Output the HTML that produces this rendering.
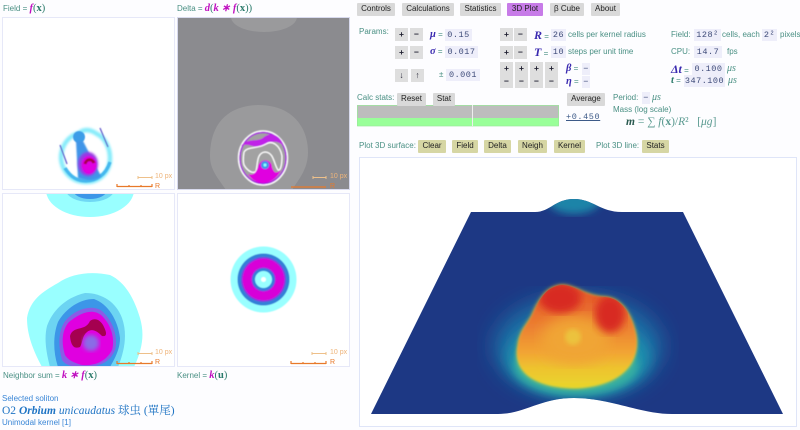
<!DOCTYPE html>
<html><head><meta charset="utf-8">
<style>
html{margin:0;padding:0;background:#fdfdff;}
body{margin:0;padding:0;background:#fdfdff;width:800px;height:430px;overflow:hidden;position:relative;font-family:"Liberation Sans",Arial,sans-serif;font-size:8px;color:#4a9084;filter:blur(.25px);}
.t{position:absolute;line-height:12px;white-space:nowrap;}
.b{position:absolute;background:#d9d9d9;color:#222;text-align:center;line-height:12px;height:12.500px;border-radius:1px;font-size:8px;}
.y{background:#d6d6a4;}
.n{position:absolute;background:#dedede;color:#223;text-align:center;width:13px;height:13px;line-height:13px;font-size:8.500px;font-weight:bold;}
.v{position:absolute;background:#eeeefa;color:#3d4a78;font-family:"Liberation Mono",monospace;font-size:8.500px;line-height:12px;height:11.500px;text-align:center;letter-spacing:.5px;}
.m{font-family:"Liberation Serif",serif;font-style:italic;font-weight:bold;font-size:10.500px;}
.p{font-family:'Liberation Serif',serif;font-size:10.500px;color:#2a7a6a;}
.pu{color:#3a2ab0}.mg{color:#c010c0}
svg{position:absolute;left:0;top:0;}
.o{color:#eeb47a;font-size:7px}.r{color:#e8792a;font-size:7px}
.s{font-family:'Liberation Serif',serif;font-style:italic;font-size:10px}
</style></head><body>

<svg width="800" height="430" viewBox="0 0 800 430">
<defs>
<filter id="b1"><feGaussianBlur stdDeviation="1"/></filter>
<filter id="b2"><feGaussianBlur stdDeviation="2"/></filter>
<filter id="b4"><feGaussianBlur stdDeviation="4"/></filter>
<filter id="b7"><feGaussianBlur stdDeviation="7"/></filter>
<filter id="b12"><feGaussianBlur stdDeviation="11"/></filter>
<filter id="b05"><feGaussianBlur stdDeviation=".5"/></filter>
<clipPath id="surf"><path d="M471,212 L535,212 C550,212 555,199 574,199 C593,199 600,212 622,212 L683,212 L783,414 L672,414 C640,414 610,398 574,398 C540,398 525,414 498,414 L371,414 Z"/></clipPath>
<clipPath id="pF"><rect x="3" y="18" width="171" height="171"/></clipPath>
<clipPath id="pD"><rect x="178" y="18" width="171" height="171"/></clipPath>
<clipPath id="pN"><rect x="3" y="194" width="171" height="172"/></clipPath>
<linearGradient id="body" x1="0" y1="0" x2="0" y2="1">
<stop offset="0" stop-color="#e2502a"/><stop offset=".4" stop-color="#ec7f30"/><stop offset=".66" stop-color="#f2a534"/><stop offset=".8" stop-color="#eec22f"/><stop offset="1" stop-color="#e8d62c"/>
</linearGradient>
</defs>

<!-- panels -->
<rect x="2.500" y="17.500" width="172" height="172" fill="#fff" stroke="#e6e8f8"/>
<rect x="177.500" y="17.500" width="172" height="172" fill="#8b8b8f" stroke="#d8daee"/>
<rect x="2.500" y="193.500" width="172" height="173" fill="#fff" stroke="#e6e8f8"/>
<rect x="177.500" y="193.500" width="172" height="173" fill="#fff" stroke="#e6e8f8"/>
<rect x="359.500" y="157.500" width="437" height="269" fill="#fff" stroke="#dfe5f8"/>

<!-- Field -->
<g clip-path="url(#pF)">
<g filter="url(#b05)">
<path d="M61,158 C62,172 72,182 86,182 C100,182 110,172 110,158 C110,147 104,137 97,134 C90,129 84,129 79,133 C68,136 61,146 61,158Z" fill="none" stroke="#86ecfb" stroke-width="4.500" filter="url(#b1)"/>
<path d="M65,168 C71,178 78,181 86,181 C96,181 106,175 110,162" fill="none" stroke="#45b8ee" stroke-width="3.500"/>
<circle cx="79" cy="137" r="6" fill="#3d9de8"/>
<path d="M76,141 L83,141 L101,176 C96,181 86,181 78,178 Z" fill="#3f95e8" filter="url(#b05)"/>
<ellipse cx="88" cy="164" rx="10" ry="12" fill="#9a38e4" filter="url(#b1)"/>
<ellipse cx="89" cy="165" rx="7.500" ry="9" fill="#e000e0" filter="url(#b05)"/>
<path d="M85,164 C86,159 92,158 94,163" fill="none" stroke="#a80050" stroke-width="3"/>
<path d="M60,145 L67,164" stroke="#5a50c8" stroke-width="1.200" fill="none"/>
<path d="M100,128 L108,147" stroke="#5a50c8" stroke-width="1.200" fill="none"/>
</g>
</g>

<!-- Delta -->
<g clip-path="url(#pD)">
<ellipse cx="264" cy="17" rx="33" ry="15" fill="#9a9a9c"/>
<path d="M210,156 C210,130 222,106 258,105 C295,105 308,130 308,152 C308,170 298,180 292,190 L226,190 C218,178 210,170 210,156Z" fill="#9a9a9c"/>
<g filter="url(#b05)">
<ellipse cx="263" cy="158" rx="24.500" ry="27" fill="#a2a2a2" stroke="#fff" stroke-width="1.500"/>
<ellipse cx="263" cy="158" rx="23" ry="25.500" fill="none" stroke="#a818e0" stroke-width="1.400"/>
<path d="M241,146 C248,137 258,143 264,137 C270,132 280,134 284,146 C276,139 270,142 262,146 C254,149 248,142 241,146Z" fill="#c020e8"/>
<path d="M244,152 C248,146 258,149 266,144 C272,140 280,145 282,156" fill="none" stroke="#fff" stroke-width="1.300"/>
<path d="M244,152 C243,158 243,162 244,165 C248,172 254,174 256,171 C258,165 256,153 265,152 C274,152 274,165 278,170 C280,171 282,167 282,156" fill="none" stroke="#fff" stroke-width="1.300"/>
<path d="M248,174 C254,176 256,172 258,167 C259,158 272,158 272,167 C274,173 276,174 281,170 C278,178 270,183 263,183 C256,183 251,179 248,174Z" fill="#e000e0"/>
<circle cx="265" cy="165" r="4" fill="#3f95e8"/><circle cx="265" cy="165" r="1.600" fill="#8ff"/>
</g>
</g>

<!-- Neighbor -->
<g clip-path="url(#pN)">
<ellipse cx="90" cy="190" rx="44" ry="27" fill="#99ffff"/>
<ellipse cx="90" cy="190" rx="24" ry="12" fill="#70d8f4"/>
<ellipse cx="90" cy="190" rx="17" ry="9" fill="#3c96e8"/>
<path d="M42,367 C33,350 27,335 27,318 C30,300 42,292 58,283 C72,273 92,271 110,275 C125,282 134,298 140,318 C145,335 142,350 134,367Z" fill="#99ffff"/>
<path d="M50,367 C46,352 44,338 47,326 C52,312 64,298 85,293 C102,293 116,302 122,318 C128,335 124,352 118,367Z" fill="#6cd4f2"/>
<path d="M58,367 C53,352 53,335 58,322 C66,308 80,299 94,299 C108,304 118,320 120,338 C120,350 114,360 110,367Z" fill="#3c96e8"/>
<path d="M62,360 C58,345 58,330 66,320 C76,309 92,304 102,311 C114,322 118,338 115,350 C110,362 100,367 84,367 C74,367 66,366 62,360Z" fill="#8a5ce6"/>
<path d="M65,355 C61,342 62,330 69,322 C80,313 92,308 101,315 C112,325 115,340 112,350 C106,362 94,366 82,365 C74,363 68,360 65,355Z" fill="#e000e0"/>
<path d="M70,336 C73,325 85,332 90,321 C95,317 101,320 104,327 C107,333 107,337 102,336 C97,331 92,328 87,332 C82,336 83,342 80,347 C75,349 71,347 70,336Z" fill="#a50050"/>
<circle cx="91" cy="343" r="8" fill="#8a6ce6" filter="url(#b2)"/>
</g>

<!-- Kernel -->
<g filter="url(#b05)">
<circle cx="263.500" cy="279.500" r="33" fill="#99ffff"/>
<circle cx="263.500" cy="279.500" r="26" fill="#3080d8"/>
<circle cx="263.500" cy="279.500" r="22.500" fill="#7a40e0"/>
<circle cx="263.500" cy="279.500" r="21" fill="#d800d8"/>
<circle cx="263.500" cy="279.500" r="12" fill="#7a40e0"/>
<circle cx="263.500" cy="279.500" r="11" fill="#3080d8"/>
<circle cx="263.500" cy="279.500" r="8.500" fill="#99ffff"/>
<circle cx="263.500" cy="279.500" r="2.500" fill="#fff"/>
</g>

<!-- scale bars -->
<g fill="none">
<g stroke="#eec08a"><path d="M138,177.500H152M138,176V179M152,176V179"/><path d="M313,177.500H326M313,176V179M326,176V179"/><path d="M138,353.500H152M138,352V355M152,352V355"/><path d="M312,353.500H326M312,352V355M326,352V355"/></g>
<g stroke="#e8792a" stroke-width="1.200"><path d="M117,186.500H152M117,184V187M129,185V187M141,185V187M152,184V187"/><path d="M291,187H326"/><path d="M117,363.500H152M117,361V364M129,362V364M141,362V364M152,361V364"/><path d="M291,363.500H326M291,361V364M303,362V364M315,362V364M326,361V364"/></g>
</g>

<!-- 3D surface -->
<g clip-path="url(#surf)">
<rect x="360" y="190" width="436" height="230" fill="#1d3884"/>
<ellipse cx="574" cy="199" rx="27" ry="15" fill="#1b84a8" filter="url(#b4)"/>
<ellipse cx="578" cy="346" rx="84" ry="50" fill="#1a6fa6" filter="url(#b12)"/>
<ellipse cx="578" cy="358" rx="72" ry="38" fill="#1c92ae" filter="url(#b7)"/>
<ellipse cx="576" cy="366" rx="62" ry="29" fill="#38b0a0" filter="url(#b4)"/>
<path d="M518,345 C520,330 527,325 532,315 C540,297 548,286 562,285 C575,285 585,296 605,297 C622,298 632,315 636,335 C640,360 625,385 577,388 C540,388 512,375 518,345Z" fill="#e6d32c" filter="url(#b2)"/>
<path d="M518,345 C520,330 527,325 532,315 C540,297 548,286 562,285 C575,285 585,296 605,297 C622,298 632,315 636,335 C640,360 625,385 577,388 C540,388 512,375 518,345Z" fill="url(#body)" filter="url(#b1)"/>
<clipPath id="bl"><path d="M518,345 C520,330 527,325 532,315 C540,297 548,286 562,285 C575,285 585,296 605,297 C622,298 632,315 636,335 C640,360 625,385 577,388 C540,388 512,375 518,345Z"/></clipPath>
<g clip-path="url(#bl)">
<ellipse cx="575" cy="340" rx="34" ry="24" fill="#f0a535" filter="url(#b7)"/>
<ellipse cx="560" cy="298" rx="21" ry="15" fill="#d82a22" filter="url(#b4)"/>
<ellipse cx="610" cy="314" rx="15" ry="19" fill="#d82a22" filter="url(#b4)"/>
<ellipse cx="573" cy="337" rx="8" ry="8" fill="#ecc23c" filter="url(#b2)"/>
</g>
</g>

<!-- stats bars -->
<rect x="357" y="105" width="202" height="13" fill="#bdbdbd"/>
<rect x="357" y="118" width="202" height="8" fill="#99ff99"/>
<rect x="357.500" y="105.500" width="201" height="20.500" fill="none" stroke="#9be89b" stroke-width=".7"/>
<rect x="472" y="105" width="1" height="21" fill="#eee"/>
</svg>

<!-- labels left -->
<div class="t" style="left:3px;top:3px">Field = <span class="m mg">f</span><span class="p">(<b>x</b>)</span></div>
<div class="t" style="left:177px;top:3px">Delta = <span class="m mg">d</span><span class="p">(</span><span class="m mg">k ∗ f</span><span class="p">(<b>x</b>))</span></div>
<div class="t" style="left:3px;top:370px">Neighbor sum = <span class="m mg">k ∗ f</span><span class="p">(<b>x</b>)</span></div>
<div class="t" style="left:177px;top:370px">Kernel = <span class="m mg">k</span><span class="p">(<b>u</b>)</span></div>
<div class="t" style="left:2px;top:393px;color:#3a86d6">Selected soliton</div>
<div class="t" style="left:2px;top:405px;color:#1f74c4;font-family:'Liberation Serif','Noto Serif CJK SC',serif;font-size:11.500px">O2 <b><i>Orbium</i></b> <i>unicaudatus</i> 球虫 (單尾)</div>
<div class="t" style="left:2px;top:417px;color:#3a86d6">Unimodal kernel [1]</div>

<div class="t o" style="left:155px;top:171px">10 px</div>
<div class="t r" style="left:155px;top:181px">R</div>
<div class="t o" style="left:330px;top:171px">10 px</div>
<div class="t r" style="left:330px;top:181px">R</div>
<div class="t o" style="left:155px;top:347px">10 px</div>
<div class="t r" style="left:155px;top:357px">R</div>
<div class="t o" style="left:330px;top:347px">10 px</div>
<div class="t r" style="left:330px;top:357px">R</div>

<!-- tabs -->
<div class="b" style="left:357px;top:3px;width:38px">Controls</div>
<div class="b" style="left:402px;top:3px;width:52px">Calculations</div>
<div class="b" style="left:460px;top:3px;width:41px">Statistics</div>
<div class="b" style="left:507px;top:3px;width:36px;background:#c77be8">3D Plot</div>
<div class="b" style="left:550px;top:3px;width:34px">β Cube</div>
<div class="b" style="left:591px;top:3px;width:29px">About</div>

<!-- params -->
<div class="t" style="left:359px;top:26px">Params:</div>
<div class="n" style="left:395px;top:28px">+</div><div class="n" style="left:410px;top:28px">−</div>
<div class="n" style="left:395px;top:46px">+</div><div class="n" style="left:410px;top:46px">−</div>
<div class="n" style="left:395px;top:69px">↓</div><div class="n" style="left:411px;top:69px">↑</div>
<div class="t" style="left:430px;top:29px"><span class="m pu">μ</span> =</div><div class="v" style="left:445px;top:29px;width:27px">0.15</div>
<div class="t" style="left:430px;top:46px"><span class="m pu">σ</span> =</div><div class="v" style="left:445px;top:46px;width:33px">0.017</div>
<div class="t" style="left:439px;top:69px">±</div><div class="v" style="left:446px;top:69px;width:34px">0.001</div>

<div class="n" style="left:500px;top:28px">+</div><div class="n" style="left:514px;top:28px">−</div>
<div class="n" style="left:500px;top:46px">+</div><div class="n" style="left:514px;top:46px">−</div>
<div class="t" style="left:534px;top:29px"><span class="m pu" style="font-size:12px">R</span> =</div><div class="v" style="left:551px;top:29px;width:15px">26</div>
<div class="t" style="left:568px;top:29px">cells per kernel radius</div>
<div class="t" style="left:534px;top:46px"><span class="m pu" style="font-size:12px">T</span> =</div><div class="v" style="left:551px;top:46px;width:15px">10</div>
<div class="t" style="left:568px;top:46px">steps per unit time</div>

<div class="n" style="left:500px;top:62px">+</div><div class="n" style="left:515px;top:62px">+</div><div class="n" style="left:530px;top:62px">+</div><div class="n" style="left:545px;top:62px">+</div>
<div class="n" style="left:500px;top:75px">−</div><div class="n" style="left:515px;top:75px">−</div><div class="n" style="left:530px;top:75px">−</div><div class="n" style="left:545px;top:75px">−</div>
<div class="t" style="left:566px;top:63px"><span class="m pu">β</span> =</div><div class="v" style="left:582px;top:63px;width:8px">−</div>
<div class="t" style="left:566px;top:76px"><span class="m pu">η</span> =</div><div class="v" style="left:582px;top:76px;width:8px">−</div>

<div class="t" style="left:671px;top:29px">Field:</div><div class="v" style="left:694px;top:29px;width:27px">128²</div>
<div class="t" style="left:722px;top:29px">cells, each</div><div class="v" style="left:762px;top:29px;width:15px">2²</div>
<div class="t" style="left:780px;top:29px">pixels</div>
<div class="t" style="left:671px;top:46px">CPU:</div><div class="v" style="left:694px;top:46px;width:28px">14.7</div>
<div class="t" style="left:727px;top:46px">fps</div>
<div class="t" style="left:671px;top:63px"><span class="m pu" style="font-size:12px">Δt</span> =</div><div class="v" style="left:692px;top:63px;width:33px">0.100</div>
<div class="t s" style="left:727px;top:63px">μs</div>
<div class="t" style="left:671px;top:75px"><i class="p" style="font-weight:bold">t</i> =</div><div class="v" style="left:684px;top:75px;width:41px">347.100</div>
<div class="t s" style="left:728px;top:75px">μs</div>

<!-- calc stats -->
<div class="t" style="left:357px;top:92px">Calc stats:</div>
<div class="b" style="left:397px;top:93px;width:29px">Reset</div>
<div class="b" style="left:433px;top:93px;width:22px">Stat</div>
<div class="b" style="left:567px;top:93px;width:38px">Average</div>
<div class="t" style="left:566px;top:111px;font-family:'Liberation Mono',monospace;font-size:8.500px;color:#3d5a88;text-decoration:underline;letter-spacing:.6px">+0.450</div>
<div class="t" style="left:613px;top:92px">Period:</div><div class="v" style="left:642px;top:92px;width:8px">−</div>
<div class="t s" style="left:652px;top:92px">μs</div>
<div class="t" style="left:613px;top:104px">Mass (log scale)</div>
<div class="t" style="left:626px;top:116px;font-family:'Liberation Serif',serif;font-size:11.500px;color:#5a9a90"><b style="color:#2a5a50"><i>m</i></b> = ∑ <i>f</i>(<b>x</b>)/<i>R</i>²&nbsp;&nbsp;&nbsp;[<i>μg</i>]</div>

<!-- plot buttons -->
<div class="t" style="left:359px;top:140px">Plot 3D surface:</div>
<div class="b y" style="left:418px;top:140px;width:28px">Clear</div>
<div class="b y" style="left:452px;top:140px;width:26px">Field</div>
<div class="b y" style="left:484px;top:140px;width:27px">Delta</div>
<div class="b y" style="left:518px;top:140px;width:29px">Neigh</div>
<div class="b y" style="left:554px;top:140px;width:31px">Kernel</div>
<div class="t" style="left:596px;top:140px">Plot 3D line:</div>
<div class="b y" style="left:642px;top:140px;width:27px">Stats</div>

</body></html>
